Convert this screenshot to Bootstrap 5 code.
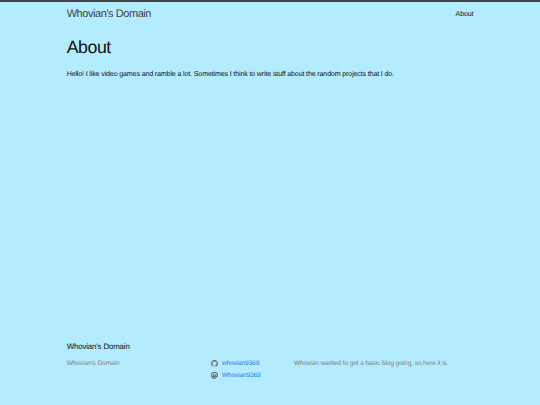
<!DOCTYPE html>
<html lang="en">
<head>
  <meta charset="UTF-8">
  <meta name="viewport" content="width=device-width, initial-scale=1.0">
  <title>About | Whovian's Domain</title>
  <!-- Bootstrap CSS -->
  <link rel="stylesheet" href="https://cdn.jsdelivr.net/npm/bootstrap@5.3.3/dist/css/bootstrap.min.css">
  <style>
    body {
      background-color: #b3ebff;
      color: #111;
      font-family: "Liberation Sans", Arial, sans-serif;
      font-size: 7.1px;
      line-height: 10px;
      letter-spacing: -0.149px;
      text-rendering: geometricPrecision;
    }

    .wrapper {
      width: 406.7px;
      margin: 0 auto;
    }

    .site-header {
      height: 26px;
      border-top: 2px solid #424242;
      border-bottom: 1px solid #c0ebf8;
    }

    .site-title {
      padding: 1px 0 0;
      font-size: 10.97px;
      line-height: 22px;
      letter-spacing: -0.42px;
      color: #424242;
    }

    .page-link-top {
      padding: 1px 0 0;
      line-height: 22px;
      color: #111;
    }

    .post-title {
      margin: 0 0 13px;
      font-size: 17.72px;
      font-weight: 400;
      line-height: 18px;
      letter-spacing: -0.42px;
    }

    .page-content {
      padding-top: 12px;
    }

    .site-footer {
      height: 77px;
      padding-top: 12px;
      border-top: 1px solid #c0ebf8;
    }

    .footer-heading {
      margin: 0 0 5px;
      font-size: 7.9px;
      font-weight: 400;
      line-height: 12px;
      letter-spacing: -0.16px;
    }

    .footer-cols {
      font-size: 6.6px;
      line-height: 12px;
      letter-spacing: -0.12px;
      color: #828282;
    }

    .col-contact {
      width: 144.6px;
    }

    .col-social {
      width: 82.7px;
    }

    .col-social a {
      color: #2a7ae2;
      letter-spacing: -0.15px;
    }

    .social-icon {
      width: 7px;
      height: 7px;
      margin-right: 3.7px;
      margin-bottom: 1px;
      fill: #6c6c6c;
    }
  </style>
</head>
<body class="d-flex flex-column min-vh-100">
<header class="site-header">
  <nav class="wrapper navbar p-0">
    <a class="navbar-brand site-title m-0" href="#">Whovian's Domain</a>
    <a class="nav-link page-link-top" href="#">About</a>
  </nav>
</header>

<main class="page-content flex-grow-1">
  <div class="wrapper">
    <h1 class="post-title">About</h1>
    <p class="mb-0">Hello! I like video games and ramble a lot. Sometimes I think to write stuff about the random projects that I do.</p>
  </div>
</main>

<footer class="site-footer">
  <div class="wrapper">
    <h2 class="footer-heading">Whovian's Domain</h2>
    <div class="footer-cols d-flex">
      <div class="col-contact">Whovian's Domain</div>
      <ul class="col-social list-unstyled mb-0">
        <li>
          <a class="d-flex align-items-center text-decoration-none" href="#">
            <svg class="social-icon" viewBox="0 0 16 16"><path d="M8 0C3.58 0 0 3.58 0 8c0 3.54 2.29 6.53 5.47 7.59.4.07.55-.17.55-.38 0-.19-.01-.82-.01-1.49-2.01.37-2.53-.49-2.69-.94-.09-.23-.48-.94-.82-1.13-.28-.15-.68-.52-.01-.53.63-.01 1.08.58 1.23.82.72 1.21 1.87.87 2.33.66.07-.52.28-.87.51-1.07-1.78-.2-3.64-.89-3.64-3.95 0-.87.31-1.59.82-2.15-.08-.2-.36-1.02.08-2.12 0 0 .67-.21 2.2.82.64-.18 1.32-.27 2-.27s1.36.09 2 .27c1.53-1.04 2.2-.82 2.2-.82.44 1.1.16 1.92.08 2.12.51.56.82 1.27.82 2.15 0 3.07-1.87 3.75-3.65 3.95.29.25.54.73.54 1.48 0 1.07-.01 1.93-.01 2.2 0 .21.15.46.55.38A8.01 8.01 0 0 0 16 8c0-4.42-3.58-8-8-8z"/></svg>
            <span>whovian9369</span>
          </a>
        </li>
        <li>
          <a class="d-flex align-items-center text-decoration-none" href="#">
            <svg class="social-icon" viewBox="0 0 16 16"><path fill-rule="evenodd" d="M4 .4C6 0 10 0 12 .4c2 .3 3.4 1.8 3.6 3.6.2 2 .2 4-.1 5.6-.3 1.7-1.9 2.7-3.7 3-2.3.3-4.7.3-6.8-.2 0 1.7 1.5 2.1 3.3 2.1 1.2 0 2.3-.2 3.2-.4l.1 1.3c-1.1.5-2.4.6-3.6.6-3.4 0-6.3-1-7-4.5C.4 9 .3 6 .5 4 .7 2.2 2 .7 4 .4zM3.200 4.900v5H5V5.200c0-1.600 2.100-1.600 2.100.2v2.400h1.800V5.400c0-1.800 2.100-1.800 2.100-.2v4.700h1.800v-5c0-2.700-3.400-3.100-4.800-1.100-1.400-2-4.800-1.600-4.800 1.100z"/></svg>
            <span>Whovian9369</span>
          </a>
        </li>
      </ul>
      <div>Whovian wanted to get a basic blog going, so here it is.</div>
    </div>
  </div>
</footer>

<script src="https://cdn.jsdelivr.net/npm/bootstrap@5.3.3/dist/js/bootstrap.bundle.min.js"></script>
</body>
</html>
